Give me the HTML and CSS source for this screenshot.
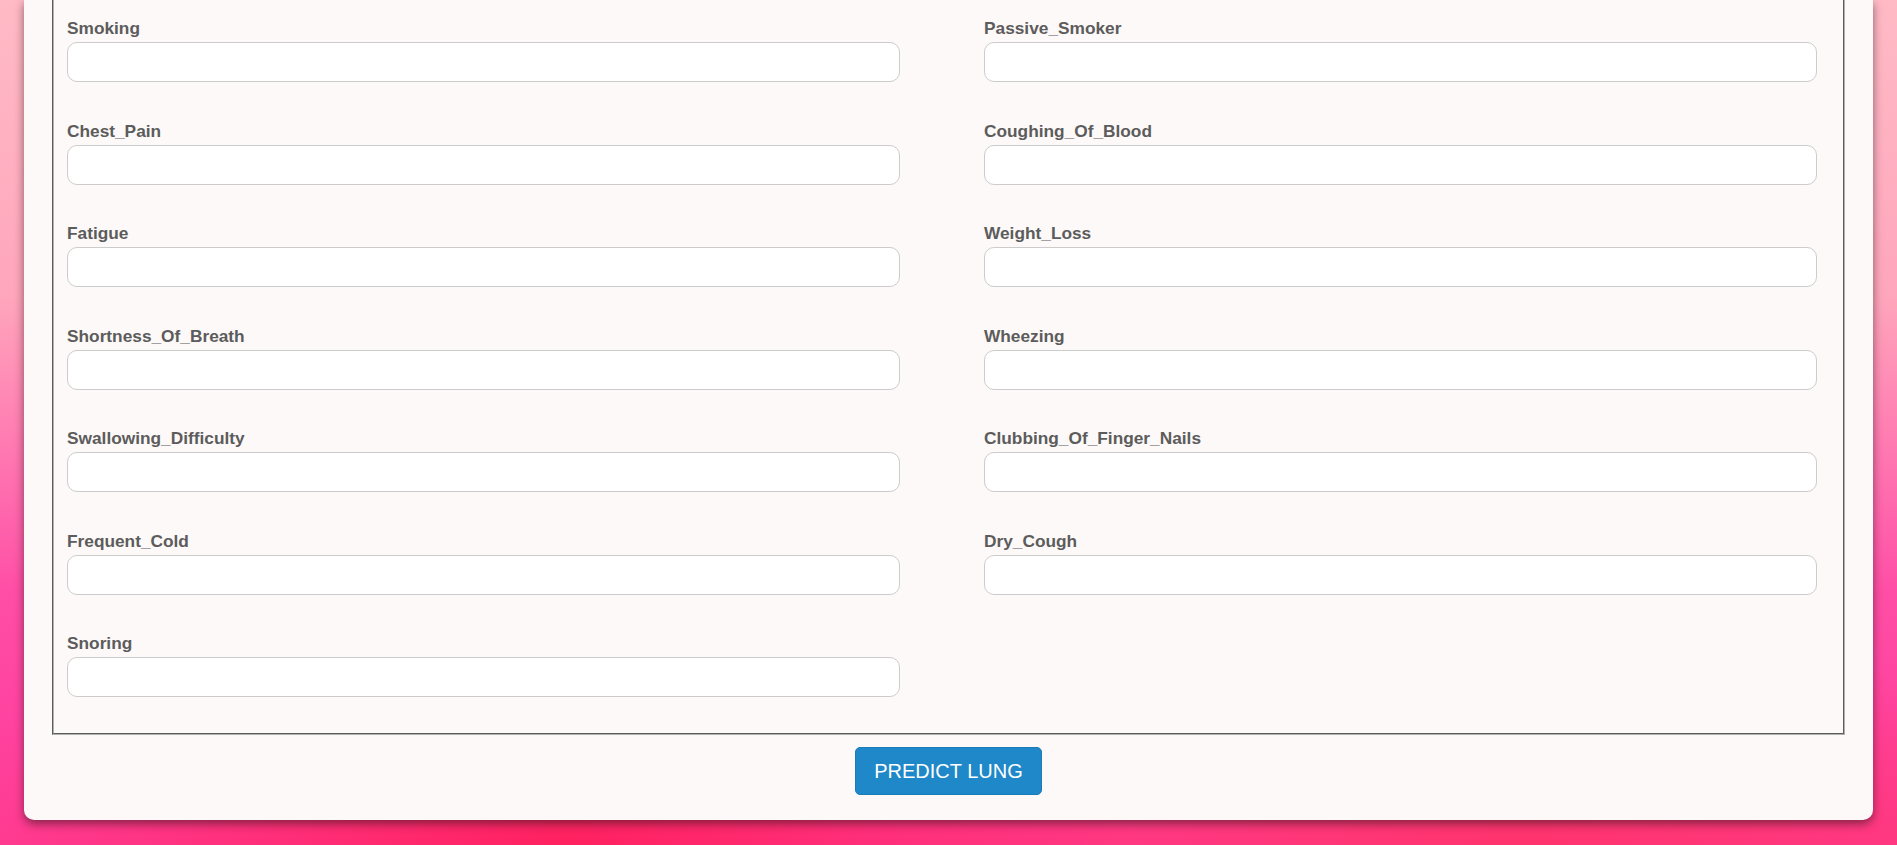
FILE: index.html
```html
<!DOCTYPE html>
<html lang="en">
<head>
<meta charset="utf-8">
<title>Lung Cancer Prediction</title>
<link rel="stylesheet" href="styles.css">
</head>
<body>
<div class="card">
  <form class="predict-form">
    <fieldset class="fields">
      <div class="field"><label class="field-label" for="f1">Smoking</label><input class="field-input" id="f1" type="text"></div>
      <div class="field"><label class="field-label" for="f2">Passive_Smoker</label><input class="field-input" id="f2" type="text"></div>
      <div class="field"><label class="field-label" for="f3">Chest_Pain</label><input class="field-input" id="f3" type="text"></div>
      <div class="field"><label class="field-label" for="f4">Coughing_Of_Blood</label><input class="field-input" id="f4" type="text"></div>
      <div class="field"><label class="field-label" for="f5">Fatigue</label><input class="field-input" id="f5" type="text"></div>
      <div class="field"><label class="field-label" for="f6">Weight_Loss</label><input class="field-input" id="f6" type="text"></div>
      <div class="field"><label class="field-label" for="f7">Shortness_Of_Breath</label><input class="field-input" id="f7" type="text"></div>
      <div class="field"><label class="field-label" for="f8">Wheezing</label><input class="field-input" id="f8" type="text"></div>
      <div class="field"><label class="field-label" for="f9">Swallowing_Difficulty</label><input class="field-input" id="f9" type="text"></div>
      <div class="field"><label class="field-label" for="f10">Clubbing_Of_Finger_Nails</label><input class="field-input" id="f10" type="text"></div>
      <div class="field"><label class="field-label" for="f11">Frequent_Cold</label><input class="field-input" id="f11" type="text"></div>
      <div class="field"><label class="field-label" for="f12">Dry_Cough</label><input class="field-input" id="f12" type="text"></div>
      <div class="field"><label class="field-label" for="f13">Snoring</label><input class="field-input" id="f13" type="text"></div>
    </fieldset>
    <div class="actions">
      <button class="predict-btn" type="button">PREDICT LUNG</button>
    </div>
  </form>
</div>
</body>
</html>
```

FILE: styles.css
```css
html, body {
  margin: 0;
  padding: 0;
  height: 845px;
  overflow: hidden;
}

body {
  font-family: "Liberation Sans", Arial, sans-serif;
  background:
    radial-gradient(ellipse 30% 25% at 30% 100%, rgba(255, 30, 90, 0.9), rgba(255, 30, 90, 0) 100%),
    radial-gradient(ellipse 35% 25% at 80% 100%, rgba(255, 50, 100, 0.8), rgba(255, 50, 100, 0) 100%),
    linear-gradient(180deg, #ffbac6 0%, #ffa6bc 35%, #ff74b0 55%, #ff4ea6 70%, #ff43a0 85%, #ff3a90 100%);
  padding: 0 24px 25px;
  box-sizing: border-box;
}

.card {
  background: #fdf9f8;
  border-radius: 0 0 10px 10px;
  box-shadow: 0 4px 10px rgba(40, 20, 20, 0.55);
  padding: 0 28px 25px;
}

.predict-form {
  margin: 0;
}

.fields {
  margin: 0;
  min-width: 0;
  border: 2px groove #b0b0b0;
  border-top: none;
  padding: 18px 26px 36px 13px;
  display: grid;
  grid-template-columns: 1fr 1fr;
  column-gap: 84px;
  row-gap: 38.5px;
}

.field {
  display: flex;
  flex-direction: column;
}

.field-label {
  font-size: 17.3px;
  font-weight: bold;
  line-height: 20px;
  color: #5c5c5c;
  margin-bottom: 4px;
}

.field-input {
  box-sizing: border-box;
  height: 40px;
  width: 100%;
  border: 1px solid #cccccc;
  border-radius: 10px;
  background: #ffffff;
  padding: 0 12px;
  font-family: inherit;
  font-size: 16px;
  outline: none;
}

.actions {
  display: flex;
  justify-content: center;
  padding-top: 12px;
}

.predict-btn {
  height: 48px;
  width: 187px;
  background: #1f88c9;
  border: 1px solid #1b7cba;
  border-radius: 5px;
  color: #ffffff;
  font-family: "Liberation Sans", Arial, sans-serif;
  font-size: 20px;
  padding: 0;
  cursor: pointer;
}
```
